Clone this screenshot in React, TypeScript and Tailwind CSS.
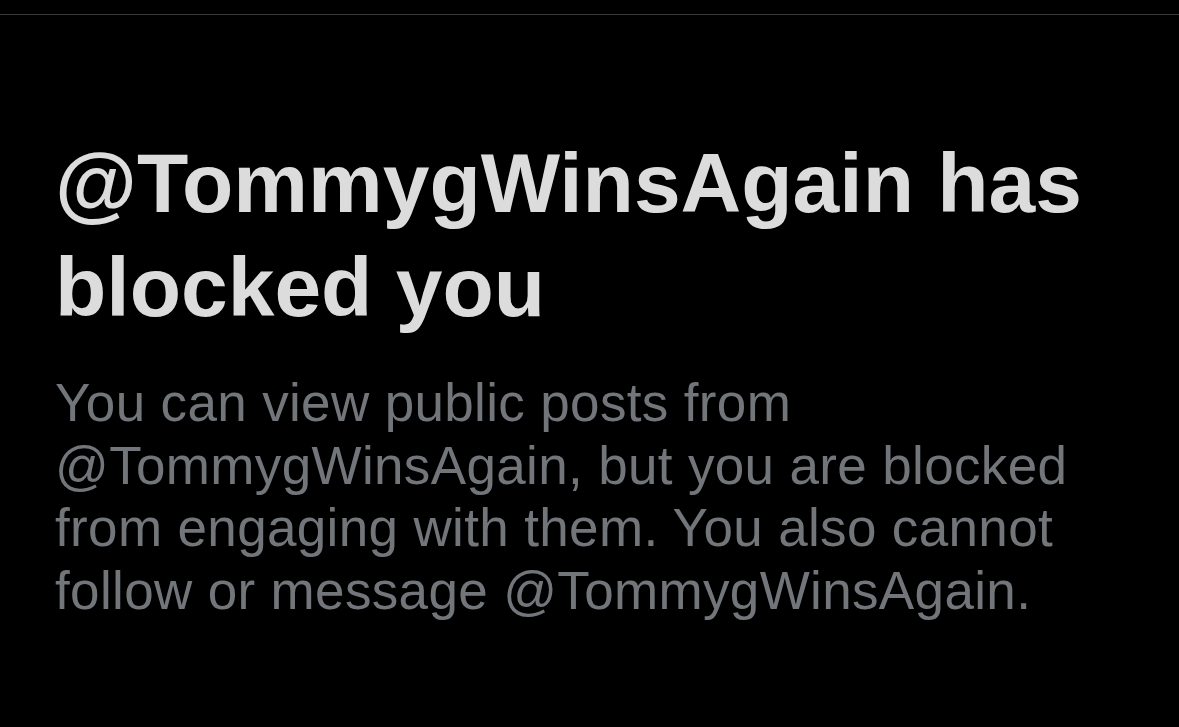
import React from "react";

// Blocked-profile notice, dark theme
const App: React.FC = () => {
  const handle = "@TommygWinsAgain";

  return (
    <div className="min-h-screen w-full bg-black overflow-hidden" style={{ fontFamily: '"Liberation Sans", Arial, sans-serif' }}>
      <div className="h-[14px]" />
      <div className="h-px w-full bg-[#3a3a3a]" />

      <div className="pl-[55px] pt-[116px]">
        <h1 className="text-[84px] leading-[104px] font-bold text-[#dcdcdc]">
          <span className="block">{handle} has</span>
          <span className="block">blocked you</span>
        </h1>

        <p className="mt-[33px] text-[53px] leading-[62.5px] text-[#72767b] tracking-[0.35px]">
          <span className="block">You can view public posts from</span>
          <span className="block">{handle}, but you are blocked</span>
          <span className="block">from engaging with them. You also cannot</span>
          <span className="block">follow or message {handle}.</span>
        </p>
      </div>
    </div>
  );
};

export default App;
